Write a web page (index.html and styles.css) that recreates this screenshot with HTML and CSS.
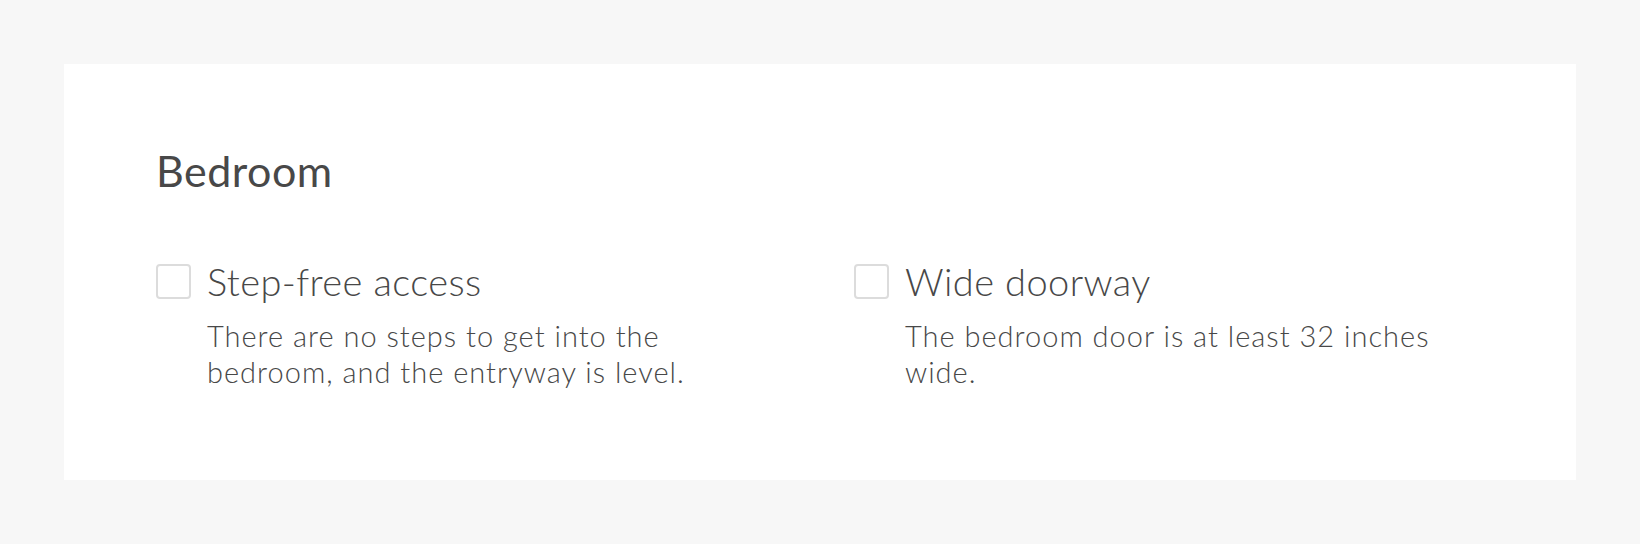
FILE: index.html
```html
<!DOCTYPE html>
<html lang="en">
<head>
<meta charset="utf-8">
<title>Bedroom</title>
<link rel="stylesheet" href="styles.css">
</head>
<body>
<section class="card">
  <h2 class="title">Bedroom</h2>
  <div class="options">
    <label class="option">
      <span class="box"></span>
      <span class="text">
        <span class="name">Step-free access</span>
        <span class="desc">There are no steps to get into the bedroom, and the entryway is level.</span>
      </span>
    </label>
    <label class="option">
      <span class="box"></span>
      <span class="text">
        <span class="name">Wide doorway</span>
        <span class="desc">The bedroom door is at least 32 inches wide.</span>
      </span>
    </label>
  </div>
</section>
</body>
</html>
```

FILE: styles.css
```css
html, body {
  margin: 0;
  padding: 0;
}
body {
  background: #f7f7f7;
  padding: 64px;
  font-family: Lato, "Noto Sans", sans-serif;
  color: #484848;
}
.card {
  background: #ffffff;
  padding: 81px 92px 90px;
}
.title {
  margin: 0 0 62px;
  font-size: 43px;
  line-height: 52px;
  font-weight: 400;
  letter-spacing: 0.5px;
}
.options {
  display: grid;
  grid-template-columns: 600px 600px;
  column-gap: 98px;
}
.option {
  display: flex;
  align-items: flex-start;
  gap: 16px;
}
.box {
  flex: none;
  box-sizing: border-box;
  width: 35px;
  height: 35px;
  margin-top: 5px;
  border: 2px solid #dcdcdc;
  border-radius: 4px;
  background: #fff;
}
.text {
  display: flex;
  flex-direction: column;
  gap: 15px;
}
.name {
  font-size: 38px;
  line-height: 44px;
  font-weight: 300;
  letter-spacing: 0.4px;
}
.desc {
  font-size: 29px;
  line-height: 36px;
  font-weight: 300;
  letter-spacing: 1px;
  max-width: 540px;
}
```
